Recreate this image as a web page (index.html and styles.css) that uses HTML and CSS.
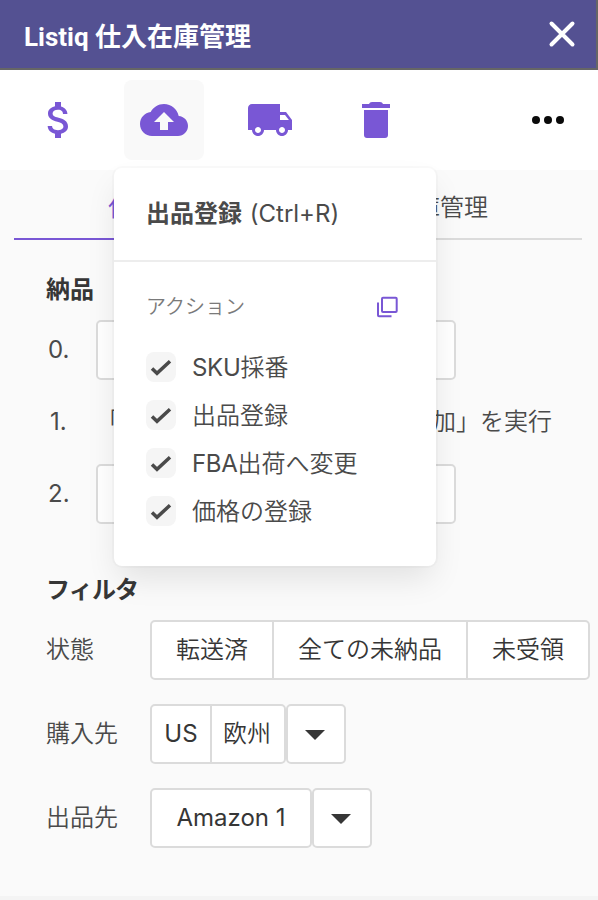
FILE: index.html
```html
<!DOCTYPE html>
<html lang="ja">
<head>
<meta charset="utf-8">
<title>Listiq 仕入在庫管理</title>
<link rel="stylesheet" href="styles.css">
</head>
<body>
<header class="titlebar">
  <h1>Listiq 仕入在庫管理</h1>
  <svg class="close" viewBox="0 0 28 28"><path d="M3.5 3.5l21 21M24.5 3.5l-21 21"/></svg>
</header>
<nav class="toolbar">
  <div class="tool money"><svg viewBox="0 0 24 24"><path d="M11.8 10.9c-2.27-.59-3-1.2-3-2.15 0-1.09 1.01-1.85 2.7-1.85 1.78 0 2.44.85 2.5 2.1h2.21c-.07-1.72-1.12-3.3-3.21-3.81V3h-3v2.16c-1.94.42-3.5 1.68-3.5 3.61 0 2.31 1.91 3.46 4.7 4.13 2.5.6 3 1.48 3 2.41 0 .69-.49 1.79-2.7 1.79-2.06 0-2.87-.92-2.98-2.1h-2.2c.12 2.19 1.76 3.42 3.68 3.83V21h3v-2.15c1.95-.37 3.5-1.5 3.5-3.55 0-2.84-2.43-3.81-4.7-4.4z"/></svg></div>
  <div class="tool active"><svg viewBox="0 0 24 24"><path d="M19.35 10.04C18.67 6.59 15.64 4 12 4 9.11 4 6.6 5.64 5.35 8.04 2.34 8.36 0 10.91 0 14c0 3.31 2.69 6 6 6h13c2.76 0 5-2.24 5-5 0-2.64-2.05-4.78-4.65-4.96zM14 13v4h-4v-4H7l5-5 5 5h-3z"/></svg>
    <section class="popover">
      <div class="pop-head"><b>出品登録</b> <span class="latin">(Ctrl+R)</span></div>
      <div class="pop-body">
        <div class="pop-label"><span>アクション</span><svg viewBox="0 0 22 22"><rect x="6" y="1.7" width="14.7" height="14.3" rx="1"/><path d="M2 6.5v12.8q0 1 1 1h12.5"/></svg></div>
        <ul class="actions">
          <li><i class="check"><svg viewBox="0 0 30 30"><path d="M6 16.5l5 4.8L24 9.2"/></svg></i><span><span class="latin">SKU</span>採番</span></li>
          <li><i class="check"><svg viewBox="0 0 30 30"><path d="M6 16.5l5 4.8L24 9.2"/></svg></i><span>出品登録</span></li>
          <li><i class="check"><svg viewBox="0 0 30 30"><path d="M6 16.5l5 4.8L24 9.2"/></svg></i><span><span class="latin">FBA</span>出荷へ変更</span></li>
          <li><i class="check"><svg viewBox="0 0 30 30"><path d="M6 16.5l5 4.8L24 9.2"/></svg></i><span>価格の登録</span></li>
        </ul>
      </div>
    </section>
  </div>
  <div class="tool"><svg viewBox="0 0 24 24"><path d="M20 8h-3V4H3c-1.1 0-2 .9-2 2v11h2c0 1.66 1.34 3 3 3s3-1.34 3-3h6c0 1.66 1.34 3 3 3s3-1.34 3-3h2v-5l-3-4zM6 18.5c-.83 0-1.5-.67-1.5-1.5s.67-1.5 1.5-1.5 1.5.67 1.5 1.5-.67 1.5-1.5 1.5zm13.5-9l1.96 2.5H17V9.5h2.5zm-1.5 9c-.83 0-1.5-.67-1.5-1.5s.67-1.5 1.5-1.5 1.5.67 1.5 1.5-.67 1.5-1.5 1.5z"/></svg></div>
  <div class="tool"><svg viewBox="0 0 24 24"><path d="M6 19.5c0 .9.6 1.5 1.5 1.5h9c.9 0 1.5-.6 1.5-1.5V7H6v12.5zM19 4h-3.5q-.3-1-1.5-1h-4q-1.2 0-1.5 1H5v2h14V4z"/></svg></div>
  <div class="tool more"><svg viewBox="0 0 24 24"><circle cx="6" cy="12" r="2"/><circle cx="12" cy="12" r="2"/><circle cx="18" cy="12" r="2"/></svg></div>
</nav>
<main class="panel">
  <div class="tabs"><span class="tab selected">仕入管理</span><span class="tab">在庫管理</span></div>
  <h2>納品</h2>
  <ol class="steps">
    <li><span class="num latin">0.</span><div class="field"></div></li>
    <li><span class="num one latin">1.</span><span>「在庫管理リストへ新商品を追加」を実行</span></li>
    <li><span class="num latin">2.</span><div class="field"></div></li>
  </ol>
  <h2 class="filter-title">フィルタ</h2>
  <div class="filters">
    <div class="row"><label>状態</label><div class="group"><button>転送済</button><button>全ての未納品</button><button>未受領</button></div></div>
    <div class="row"><label>購入先</label><div class="group compact"><button class="us latin">US</button><button>欧州</button></div><button class="drop"><svg viewBox="0 0 20 10"><path d="M0 0h20L10 10z"/></svg></button></div>
    <div class="row"><label>出品先</label><div class="group"><button class="account latin">Amazon 1</button></div><button class="drop"><svg viewBox="0 0 20 10"><path d="M0 0h20L10 10z"/></svg></button></div>
  </div>
</main>
</body>
</html>
```
FILE: styles.css
```css
* { box-sizing: border-box; margin: 0; padding: 0; }
html { background: #f4f4f4; }
body {
  width: 598px; height: 900px; overflow: hidden;
  font: 350 24px/36px Inter, "Noto Sans CJK JP", sans-serif;
  color: #4a4a4a;
}
.titlebar {
  height: 70px; padding: 0 20px 0 24px;
  display: flex; align-items: center; justify-content: space-between;
  background: #545192;
  border-bottom: 2px solid #666; border-right: 2px solid #666;
  color: #fff;
}
.titlebar h1 { font: 700 26px/36px Roboto, "Noto Sans CJK JP", sans-serif; padding-top: 5px; white-space: nowrap; }
.close { width: 28px; height: 28px; fill: none; stroke: #fff; stroke-width: 4; stroke-linecap: round; }
.toolbar {
  height: 100px; padding: 10px 10px 10px 18px;
  display: flex; gap: 26px;
  background: #fff;
}
.tool { position: relative; width: 80px; height: 80px; border-radius: 8px; display: flex; align-items: center; justify-content: center; }
.tool > svg { width: 48px; height: 48px; fill: #7957d5; }
.tool.money { padding-left: 2px; }
.tool.active { background: #f9f9f9; }
.tool.more { margin-left: auto; }
.tool.more > svg { fill: #0a0a0a; }
.popover {
  position: absolute; z-index: 2; left: -10px; top: 88px;
  width: 322px; height: 398px;
  background: #fff; border-radius: 8px;
  box-shadow: 0 16px 32px -4px rgba(10,10,10,.1), 0 0 0 2px rgba(10,10,10,.02);
}
.pop-head { height: 94px; padding: 28px 32px 0; border-bottom: 2px solid #ededed; white-space: nowrap; }
.pop-head b { font-weight: 700; }
.pop-head .latin { margin-left: 1px; }
.pop-body { padding: 26px 32px; }
.pop-label { display: flex; justify-content: space-between; align-items: center; height: 38px; font-size: 20px; color: #7a7a7a; padding-right: 6px; }
.pop-label svg { width: 22px; height: 22px; fill: none; stroke: #7957d5; stroke-width: 2; }
.actions { list-style: none; margin-top: 17px; }
.actions li { height: 48px; display: flex; align-items: center; gap: 16px; white-space: nowrap; }
.actions li > span { padding-top: 2px; }
.actions .latin { letter-spacing: -.3px; }
.latin { font-weight: 400; }
.check { width: 30px; height: 30px; border-radius: 8px; background: #f5f5f5; }
.check svg { display: block; fill: none; stroke: #4a4a4a; stroke-width: 3.5; }
.panel { height: 726px; background: #fafafa; padding: 0 8px 0 14px; }
.tabs { display: flex; width: 568px; height: 70px; }
.tab { flex: 1; text-align: center; padding-top: 20px; border-bottom: 2px solid #dbdbdb; }
.tab.selected { color: #7957d5; border-color: #7957d5; }
h2 { font-size: 24px; line-height: 36px; font-weight: 700; color: #363636; margin: 32px 0 12px 32px; }
.steps { list-style: none; display: grid; gap: 12px; padding-left: 34px; }
.steps li { display: grid; grid-template-columns: 48px auto; height: 60px; align-items: center; white-space: nowrap; }
.num.one { padding-left: 2px; }
.field { width: 360px; height: 60px; border: 2px solid #dbdbdb; border-radius: 5px; background: #fff; }
.filter-title { margin-top: 48px; letter-spacing: -.8px; }
.filters { display: grid; gap: 24px; padding-left: 32px; }
.row { display: flex; height: 60px; align-items: center; }
label { width: 104px; }
.group { display: flex; }
button {
  height: 60px; padding: 0 24px;
  border: 2px solid #dbdbdb; background: #fff; color: #363636;
  font: inherit; white-space: nowrap;
}
button.latin { font-weight: 400; }
.group button + button { margin-left: -2px; }
.group button:first-child { border-top-left-radius: 5px; border-bottom-left-radius: 5px; }
.group button:last-child { border-top-right-radius: 5px; border-bottom-right-radius: 5px; }
.compact button { width: 76px; padding: 0 12px 0 10px; }
.compact .us { width: 62px; padding: 0 10px; }
.account { width: 162px; }
.drop { width: 60px; padding: 0 2px 0 0; display: flex; align-items: center; justify-content: center; border-radius: 5px; }
.drop svg { width: 20px; height: 10px; fill: #363636; margin-top: 2px; }
```
